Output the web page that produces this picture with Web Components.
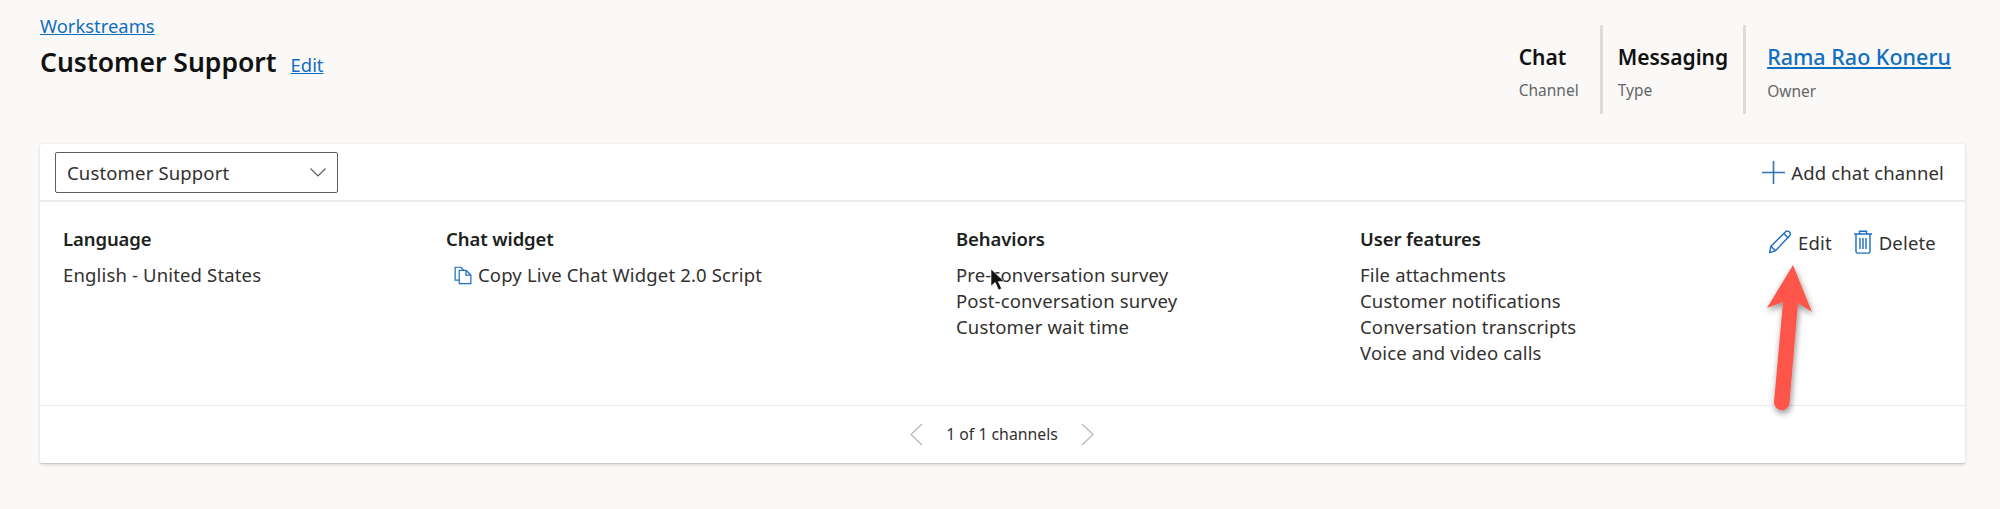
<!DOCTYPE html>
<html lang="en">
<head>
<meta charset="utf-8">
<title>Customer Support</title>
<style>
    html, body { margin: 0; }
    body {
        background: #faf9f8;
        color: #201f1e;
        height: 509px;
        overflow: hidden;
    }
</style>
</head>
<body>
<workstream-page>
    <page-header></page-header>
    <channel-card></channel-card>
</workstream-page>
<page-marks></page-marks>

<script>
const FONT = '"Noto Sans", "Open Sans", sans-serif';

class WorkstreamPage extends HTMLElement {
    connectedCallback() {
        this.attachShadow({ mode: 'open' });
        this.shadowRoot.innerHTML = `
            <style>
                :host {
                    display: flex;
                    flex-direction: column;
                    padding: 14px 35px 0 40px;
                    font-family: ${FONT};
                }
            </style>
            <slot></slot>
        `;
    }
}

class StatBlock extends HTMLElement {
    connectedCallback() {
        const isLink = this.hasAttribute('link');
        const value = this.getAttribute('value');
        this.attachShadow({ mode: 'open' });
        this.shadowRoot.innerHTML = `
            <style>
                :host {
                    display: flex;
                    flex-direction: column;
                    height: 89px;
                    padding: 0 15px;
                    border-left: 3px solid #dedcda;
                    box-sizing: border-box;
                }
                :host(:first-child) { border-left: 0; padding: 0 21px 0 0; }
                :host(:last-child) { padding: 0 14px 0 21px; }
                .value {
                    margin-top: 19px;
                    font-size: 21px;
                    line-height: 26px;
                    font-weight: 600;
                    color: #111;
                    white-space: nowrap;
                }
                a { color: #106ebe; font-weight: 500; font-size: 21.5px; }
                .label {
                    margin-top: 10px;
                    font-size: 15.5px;
                    line-height: 20px;
                    color: #666;
                }
                :host(:last-child) .label { margin-top: 11px; }
            </style>
            <div class="value">${isLink ? `<a href="#">${value}</a>` : value}</div>
            <div class="label">${this.getAttribute('label')}</div>
        `;
    }
}

class PageHeader extends HTMLElement {
    connectedCallback() {
        this.attachShadow({ mode: 'open' });
        this.shadowRoot.innerHTML = `
            <style>
                :host {
                    display: flex;
                    justify-content: space-between;
                    align-items: flex-start;
                    height: 130px;
                }
                a { color: #106ebe; }
                .crumb {
                    font-size: 18.4px;
                    line-height: 24px;
                }
                .title-row {
                    display: flex;
                    align-items: baseline;
                    gap: 14px;
                    margin-top: 7px;
                }
                h1 {
                    margin: 0;
                    font-size: 26.5px;
                    line-height: 34px;
                    font-weight: 600;
                    color: #111;
                }
                .edit { font-size: 18.4px; }
                .stats {
                    display: flex;
                    margin-top: 11px;
                }
            </style>
            <div>
                <div class="crumb"><a href="#">Workstreams</a></div>
                <div class="title-row">
                    <h1>Customer Support</h1>
                    <a class="edit" href="#">Edit</a>
                </div>
            </div>
            <div class="stats">
                <stat-block value="Chat" label="Channel"></stat-block>
                <stat-block value="Messaging" label="Type"></stat-block>
                <stat-block value="Rama Rao Koneru" label="Owner" link></stat-block>
            </div>
        `;
    }
}

class InfoColumn extends HTMLElement {
    connectedCallback() {
        this.attachShadow({ mode: 'open' });
        this.shadowRoot.innerHTML = `
            <style>
                :host { display: block; }
                .heading {
                    font-size: 18.5px;
                    line-height: 24px;
                    font-weight: 600;
                    color: #201f1e;
                    letter-spacing: -0.1px;
                    margin-bottom: 11px;
                }
                ::slotted(*) {
                    display: block;
                    line-height: 26px;
                }
            </style>
            <div class="heading">${this.getAttribute('heading')}</div>
            <slot></slot>
        `;
    }
}

class ChannelCard extends HTMLElement {
    connectedCallback() {
        this.attachShadow({ mode: 'open' });
        this.shadowRoot.innerHTML = `
            <style>
                :host {
                    display: block;
                    height: 319px;
                    background: #fff;
                    border-radius: 2px;
                    box-shadow: 0 1.6px 3.6px rgba(0,0,0,.13), 0 .3px .9px rgba(0,0,0,.11);
                    font-size: 18.5px;
                    color: #323130;
                    letter-spacing: 0.15px;
                }
                .top {
                    display: flex;
                    justify-content: space-between;
                    align-items: center;
                    height: 58px;
                    padding: 0 21px 0 15px;
                    border-bottom: 2px solid #edebe9;
                    box-sizing: border-box;
                }
                .select {
                    display: flex;
                    justify-content: space-between;
                    align-items: center;
                    width: 283px;
                    height: 41px;
                    padding: 0 11px;
                    border: 1px solid #605e5c;
                    border-radius: 2px;
                    box-sizing: border-box;
                }
                .add { display: flex; align-items: center; gap: 6px; }
                .body {
                    display: grid;
                    grid-template-columns: 383px 510px 404px 408px 1fr;
                    height: 204px;
                    padding: 25px 0 0 23px;
                    box-sizing: border-box;
                    border-bottom: 1px solid #edebe9;
                }
                .copy { display: flex; align-items: center; gap: 6px; padding-left: 8px; }
                .actions {
                    display: flex;
                    align-items: center;
                    align-self: start;
                    height: 24px;
                    margin-top: 3px;
                    white-space: nowrap;
                }
                .action { display: flex; align-items: center; gap: 6px; }
                .action + .action { margin-left: 21px; }
                .pager {
                    display: flex;
                    justify-content: center;
                    align-items: center;
                    gap: 23px;
                    height: 56px;
                    font-size: 15.8px;
                    letter-spacing: 0;
                    padding-right: 1px;
                }
                svg { display: block; flex: none; }
            </style>
            <div class="top">
                <div class="select">
                    <span>Customer Support</span>
                    <svg width="16" height="9" viewBox="0 0 16 9" fill="none" stroke="#605e5c" stroke-width="1.2"><path d="M.5.5L8 8 15.5.5"/></svg>
                </div>
                <div class="add">
                    <svg width="23" height="23" viewBox="0 0 23 23" fill="none" stroke="#2f74b5" stroke-width="1.6"><path d="M11.5 0v23M0 11.5h23"/></svg>
                    <span>Add chat channel</span>
                </div>
            </div>
            <div class="body">
                <info-column heading="Language"><span>English - United States</span></info-column>
                <info-column heading="Chat widget">
                    <div class="copy">
                        <svg width="18" height="19" viewBox="0 0 19 19" fill="none" stroke="#1b6ec2" stroke-width="1.3" stroke-linejoin="round"><path d="M5.5 14.5H1.2V.8h6l3 3"/><path d="M5.5 4.2h7.5l4.8 4.8v9H5.5z"/><path d="M12.6 4.4v4.8h5"/></svg>
                        <span>Copy Live Chat Widget 2.0 Script</span>
                    </div>
                </info-column>
                <info-column heading="Behaviors">
                    <span>Pre-conversation survey</span>
                    <span>Post-conversation survey</span>
                    <span>Customer wait time</span>
                </info-column>
                <info-column heading="User features">
                    <span>File attachments</span>
                    <span>Customer notifications</span>
                    <span>Conversation transcripts</span>
                    <span>Voice and video calls</span>
                </info-column>
                <div class="actions">
                    <div class="action">
                        <svg width="24" height="24" viewBox="0 0 24 24" fill="none" stroke="#1b6ec2" stroke-width="1.4" stroke-linejoin="round"><path d="M1.6 22.6l1.4-6.4L17.6 1.8c1-1 2.8-1 3.9.2 1.1 1.1 1.1 2.7.1 3.7L7.4 20.8z"/><path d="M3 16.2l4.4 4.6M15.8 3.6l4.6 4.6"/></svg>
                        <span>Edit</span>
                    </div>
                    <div class="action">
                        <svg width="20" height="24" viewBox="0 0 20 24" fill="none" stroke="#1b6ec2" stroke-width="1.4"><path d="M1 4h18M6.5 4V1.2h7V4M3 4v17.5c0 1 .6 1.6 1.6 1.6h10.8c1 0 1.6-.6 1.6-1.6V4M7 8v11M10 8v11M13 8v11"/></svg>
                        <span>Delete</span>
                    </div>
                </div>
            </div>
            <div class="pager">
                <svg width="14" height="23" viewBox="0 0 14 23" fill="none" stroke="#b8b6b4" stroke-width="1.2"><path d="M13 1L2 11.5 13 22"/></svg>
                <span>1 of 1 channels</span>
                <svg width="14" height="23" viewBox="0 0 14 23" fill="none" stroke="#b8b6b4" stroke-width="1.2"><path d="M1 1l11 10.5L1 22"/></svg>
            </div>
        `;
    }
}

// the red arrow and the mouse pointer painted over the screenshot
class PageMarks extends HTMLElement {
    connectedCallback() {
        this.attachShadow({ mode: 'open' });
        this.shadowRoot.innerHTML = `
            <style>
                :host { display: block; position: absolute; left: 0; top: 0; }
                svg { display: block; overflow: visible; }
            </style>
            <svg width="2000" height="509" style="pointer-events:none">
                <defs>
                    <filter id="s" x="-40%" y="-20%" width="180%" height="140%">
                        <feDropShadow dx="1" dy="3" stdDeviation="3" flood-color="#000" flood-opacity=".45"/>
                    </filter>
                </defs>
                <path filter="url(#s)" fill="#fd5548" d="M1793 265L1812 312 1798 303 1789.5 403A7.7 7.7 0 0 1 1774 402L1783 302 1767 308Z"/>
                <path fill="#111" stroke="#fff" stroke-width=".6" d="M991 269v17l4.2-3.6 3.4 7.6 3-1.4-3.4-7.2h6z"/>
            </svg>
        `;
    }
}

customElements.define('workstream-page', WorkstreamPage);
customElements.define('stat-block', StatBlock);
customElements.define('page-header', PageHeader);
customElements.define('info-column', InfoColumn);
customElements.define('channel-card', ChannelCard);
customElements.define('page-marks', PageMarks);
</script>
</body>
</html>
